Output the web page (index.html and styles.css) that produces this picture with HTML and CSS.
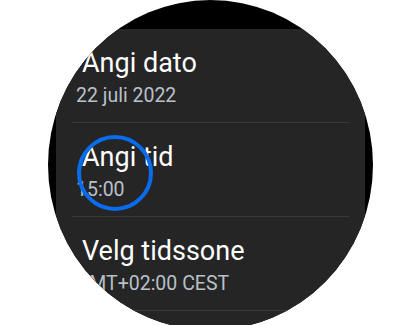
FILE: index.html
```html
<!DOCTYPE html>
<html lang="no">
<head>
<meta charset="utf-8">
<title>Dato og tid</title>
<link rel="stylesheet" href="styles.css">
</head>
<body>
<div class="watch">
  <div class="panel">
    <div class="row">
      <div class="title">Angi dato</div>
      <div class="sub">22 juli 2022</div>
    </div>
    <div class="row">
      <div class="title">Angi tid</div>
      <div class="sub">15:00</div>
    </div>
    <div class="row">
      <div class="title">Velg tidssone</div>
      <div class="sub">GMT+02:00 CEST</div>
    </div>
  </div>
</div>
<div class="ring"></div>
</body>
</html>
```
FILE: styles.css
```css
html, body {
  margin: 0;
  padding: 0;
  background: #ffffff;
  width: 420px;
  height: 325px;
  overflow: hidden;
  position: relative;
  font-family: Roboto, "Noto Sans", sans-serif;
}
.watch {
  width: 325px;
  height: 330px;
  margin-left: 48px;
  border-radius: 50%;
  background: #000;
  overflow: hidden;
  box-sizing: border-box;
  padding: 29px 8px 0 8px;
}
.panel {
  background: #252525;
  height: 100%;
}
.row {
  padding: 18px 0 14px 0;
  margin: 0 16px;
  border-bottom: 1px solid #3a3a3a;
}
.title {
  color: #ffffff;
  font-size: 27px;
  line-height: 32px;
  padding-left: 10px;
  white-space: nowrap;
}
.sub {
  color: #b8c0ca;
  font-size: 19.5px;
  line-height: 24px;
  margin-top: 5px;
  padding-left: 4px;
  white-space: nowrap;
}
.ring {
  position: absolute;
  left: 77px;
  top: 135px;
  width: 76px;
  height: 76px;
  box-sizing: border-box;
  border: 4.5px solid #0a6cec;
  border-radius: 50%;
}
```
